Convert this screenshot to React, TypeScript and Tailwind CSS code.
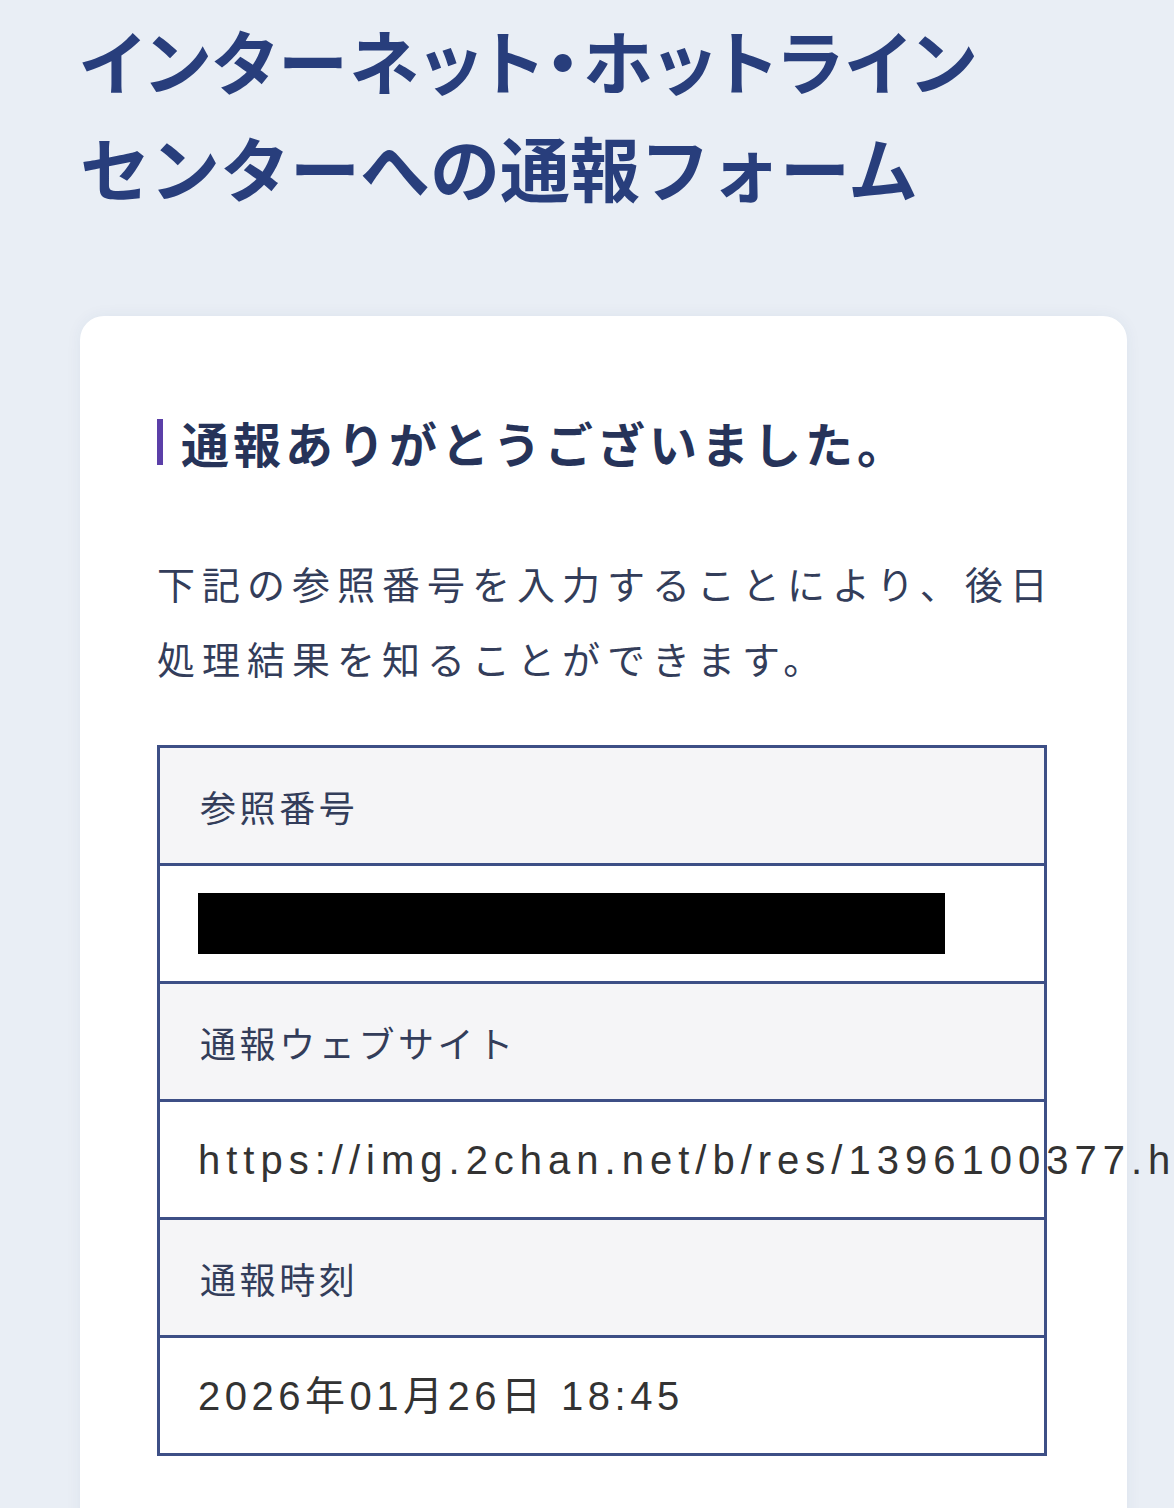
const rows: { label: string; value: React.ReactNode; tracking: string }[] = [
  {
    label: "参照番号",
    value: <div className="h-[61px] w-[747px] bg-black" />,
    tracking: "tracking-[4px]",
  },
  {
    label: "通報ウェブサイト",
    value: "https://img.2chan.net/b/res/1396100377.htm",
    tracking: "tracking-[6px]",
  },
  {
    label: "通報時刻",
    value: "2026年01月26日 18:45",
    tracking: "tracking-[4.5px]",
  },
];

const App = () => {
  return (
    <div
      className="h-[1508px] w-full overflow-hidden bg-[#e9eef5]"
      style={{ fontFamily: '"Noto Sans CJK JP", "Noto Sans", sans-serif' }}
    >
      <h1 className="px-[80px] pt-[6px] text-[70px] font-bold leading-[107px] text-[#283e7c]">
        <span className="tracking-[2.8px] [font-feature-settings:'palt']">
          インターネット・ホットライン
        </span>
        <br />
        センターへの通報フォーム
      </h1>

      <main className="ml-[80px] mr-[47px] mt-[96px] h-[1300px] rounded-[24px] bg-white px-[77px] pt-[90px] shadow-[0_0_16px_rgba(40,62,124,0.06)]">
        <h2 className="flex items-center gap-[18px] text-[48px] font-bold tracking-[4px] text-[#263359]">
          <span className="h-[46px] w-[6px] bg-[#5b3fa8]" />
          通報ありがとうございました。
        </h2>

        <p className="mt-[67px] whitespace-nowrap text-[38px] leading-[75px] tracking-[7px] text-[#333d5a]">
          下記の参照番号を入力することにより、後日
          <br />
          処理結果を知ることができます。
        </p>

        <div className="mt-[50px] w-[890px] border-[3px] border-[#3d4f86]">
          {rows.map((row, i) => (
            <div key={row.label}>
              <div
                className={
                  "flex h-[115px] items-center bg-[#f5f5f7] px-[40px] text-[36px] tracking-[0.1em] text-[#333d5a]" +
                  (i > 0 ? " box-content border-t-[3px] border-[#3d4f86]" : "")
                }
              >
                {row.label}
              </div>
              <div
                className={
                  "box-content flex h-[115px] items-center whitespace-nowrap border-t-[3px] border-[#3d4f86] px-[38px] text-[40px] text-[#333333] " +
                  row.tracking
                }
                style={{ fontFamily: '"Liberation Sans", "Noto Sans CJK JP", sans-serif' }}
              >
                {row.value}
              </div>
            </div>
          ))}
        </div>
      </main>
    </div>
  );
};

export default App;
